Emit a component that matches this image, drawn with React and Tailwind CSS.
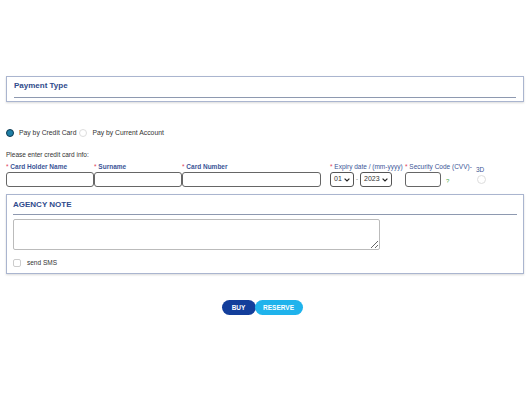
import React, { useState } from 'react';

const Label = ({ children, bold = true }) => (
  <div className={`text-[6.5px] ${bold ? 'font-bold' : 'font-normal'} text-[#3b5597] whitespace-nowrap leading-none`}>
    <span className="text-[#e0445a] font-normal">* </span>{children}
  </div>
);

const Select = ({ value, width }) => (
  <div className={`h-[15px] ${width} border border-[#555] rounded-[3px] flex items-center justify-between px-[3px] text-[7px] text-[#333] bg-white`}>
    <span>{value}</span>
    <svg width="6" height="4" viewBox="0 0 6 4"><path d="M0.6 0.6 L3 3 L5.4 0.6" fill="none" stroke="#222" strokeWidth="1.2" /></svg>
  </div>
);

const App = () => {
  const [payType, setPayType] = useState('credit');
  const [sendSms, setSendSms] = useState(false);

  return (
    <div className="w-[530px] h-[393px] bg-white px-[6px] pt-[76px] font-['Liberation_Sans',Arial,sans-serif] text-[#333]">
      {/* Payment type */}
      <div className="border border-[#aab5cf] shadow-[0_1px_2px_rgba(0,0,0,0.15)] px-[7px] pt-[3px] pb-[3px]">
        <h2 className="text-[8px] font-bold text-[#2f4b8c] leading-[11px] pb-[6px] border-b border-[#8e99b0]">Payment Type</h2>
      </div>

      <div className="flex items-center mt-[26px] text-[6.8px] text-[#333]">
        <button onClick={() => setPayType('credit')} className="flex items-center">
          <span className={`w-[8px] h-[8px] rounded-full border ${payType === 'credit' ? 'bg-[#1f7fa6] border-[#0d3a52] border-[1.5px]' : 'border-[#ddd]'}`} />
          <span className="ml-[5px]">Pay by Credit Card</span>
        </button>
        <button onClick={() => setPayType('account')} className="flex items-center ml-[3px]">
          <span className={`w-[8px] h-[8px] rounded-full border ${payType === 'account' ? 'bg-[#1f7fa6] border-[#0d3a52] border-[1.5px]' : 'border-[#ddd]'}`} />
          <span className="ml-[5px]">Pay by Current Account</span>
        </button>
      </div>

      <div className="mt-[14px] text-[6.5px] text-[#333] leading-none">Please enter credit card info:</div>

      <div className="flex items-end mt-[5px]">
        <div className="w-[88px]">
          <Label>Card Holder Name</Label>
          <input className="block mt-[2px] w-[88px] h-[15px] border border-[#666] rounded-[3px] outline-none" />
        </div>
        <div className="w-[88px]">
          <Label>Surname</Label>
          <input className="block mt-[2px] w-[88px] h-[15px] border border-[#666] rounded-[3px] outline-none" />
        </div>
        <div className="w-[139px]">
          <Label>Card Number</Label>
          <input className="block mt-[2px] w-[139px] h-[15px] border border-[#666] rounded-[3px] outline-none" />
        </div>
        <div className="ml-[9px] w-[75px]">
          <Label bold={false}>Expiry date / (mm-yyyy)</Label>
          <div className="mt-[2px] flex items-center">
            <Select value="01" width="w-[24px]" />
            <span className="text-[6px] text-[#555] mx-[2px]">-</span>
            <Select value="2023" width="w-[32px]" />
          </div>
        </div>
        <div className="w-[71px]">
          <Label bold={false}>Security Code (CVV)-</Label>
          <div className="mt-[2px] flex items-center h-[15px]">
            <input className="block w-[36px] h-[15px] border border-[#666] rounded-[3px] outline-none" />
            <span className="ml-[5px] text-[6px] leading-none text-[#4caf50] mt-[2px]">?</span>
          </div>
        </div>
        <div className="w-[20px] flex flex-col items-start">
          <span className="text-[6.5px] text-[#3b5597] leading-none mb-[2px]">3D</span>
          <span className="w-[9px] h-[9px] rounded-full border border-[#ddd] mb-[3px] ml-[1px]" />
        </div>
      </div>

      {/* Agency note */}
      <div className="mt-[7px] border border-[#aab5cf] shadow-[0_1px_2px_rgba(0,0,0,0.15)] px-[6px] pt-[4px] pb-[5px]">
        <h2 className="text-[8px] font-bold text-[#2f4b8c] leading-[11px] pb-[4px] border-b border-[#8e99b0]">AGENCY NOTE</h2>
        <textarea className="mt-[4px] w-[367px] h-[31px] border border-[#bbb] rounded-[2px] outline-none resize block" />
        <label className="flex items-center mt-[8px] text-[6.5px] text-[#333]">
          <input type="checkbox" checked={sendSms} onChange={() => setSendSms(!sendSms)} className="appearance-none w-[8px] h-[8px] border border-[#ccc] rounded-[2px]" />
          <span className="ml-[6px]">send SMS</span>
        </label>
      </div>

      <div className="flex justify-center mt-[26px] pr-[6px]">
        <button className="h-[15px] w-[34px] rounded-full bg-[#133e9b] text-white text-[6.5px] font-bold">BUY</button>
        <button className="h-[15px] w-[48px] -ml-[1px] rounded-full bg-[#1fb3ec] text-white text-[6.5px] font-bold">RESERVE</button>
      </div>
    </div>
  );
};

export default App;
